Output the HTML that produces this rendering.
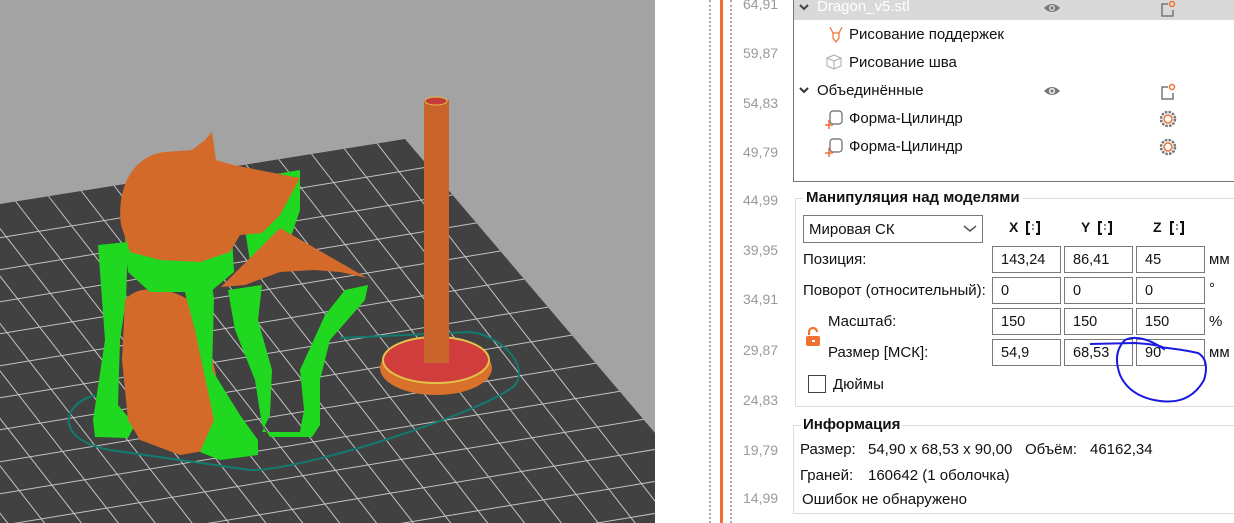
<!DOCTYPE html>
<html><head><meta charset="utf-8"><style>
*{margin:0;padding:0;box-sizing:border-box}
html,body{width:1234px;height:523px;overflow:hidden}
body{background:#fff;font-family:"Liberation Sans","DejaVu Sans",sans-serif;font-size:14px;color:#111;position:relative}
.a{position:absolute;white-space:nowrap}
.inp{position:absolute;border:1px solid #7a7a7a;height:27px;width:69px;padding:5px 0 0 8px;font-size:14.5px;background:#fff}
.rl{position:absolute;left:743px;color:#9a9a9a;font-size:14px}
</style></head><body>
<svg class="a" style="left:0;top:0" width="655" height="523" viewBox="0 0 655 523">
<defs><clipPath id="bed"><polygon points="0,204 405,139 655,433 655,523 0,523"/></clipPath></defs>
<rect width="655" height="523" fill="#a3a3a3"/>
<polygon points="0,204 405,139 655,433 655,523 0,523" fill="#414141"/>
<g clip-path="url(#bed)" stroke="#c4c4c4" stroke-width="1">
<path d="M-20,203 L600,1000 M13,198 L633,995 M46,193 L666,990 M79,188 L699,985 M112,183 L732,980 M145,178 L765,975 M178,172 L798,970 M211,167 L831,965 M244,162 L864,960 M277,157 L897,955 M310,152 L930,950 M343,147 L963,945 M376,142 L996,940 M-53,208 L567,1005 M-86,213 L534,1010 M-119,218 L501,1015 M-152,223 L468,1020 M-185,228 L435,1025 M-218,233 L402,1030 M-251,238 L369,1035 M-284,243 L336,1040 M-317,248 L303,1045 M-350,253 L270,1050 M-383,258 L237,1055 M-416,263 L204,1060"/>
<path d="M-50,246 L700,122 M-50,278 L700,154 M-50,310 L700,186 M-50,342 L700,218 M-50,374 L700,250 M-50,406 L700,282 M-50,438 L700,314 M-50,470 L700,346 M-50,502 L700,378 M-50,534 L700,410 M-50,566 L700,442 M-50,598 L700,474 M-50,630 L700,506 M-50,662 L700,538"/>
</g>
<path d="M95,395 C60,405 55,440 110,450 L250,470 C300,472 490,410 515,385 C530,365 500,335 470,332 L340,338" fill="none" stroke="#127a6e" stroke-width="2"/>
<ellipse cx="436" cy="368" rx="56" ry="27" fill="#d9702c"/>
<ellipse cx="436" cy="360" rx="53" ry="23" fill="#d13c3c" stroke="#e3c24a" stroke-width="2"/>
<rect x="424" y="100" width="25" height="263" fill="#c9652a"/>
<ellipse cx="436" cy="101" rx="11" ry="4" fill="#c53a3a" stroke="#e3c24a"/>
<path d="M98,245 L128,242 L126,300 L120,340 L118,405 L135,425 L128,438 L95,437 L93,420 L105,340 Z" fill="#1fd81f"/>
<path d="M125,300 C140,280 185,290 200,310 L215,370 L225,420 L210,450 L180,455 L140,440 L128,420 L122,360 Z" fill="#d46a2a"/>
<path d="M175,255 L208,252 L214,300 L212,370 L240,415 L258,440 L258,455 L220,460 L200,452 L214,420 L195,330 Z" fill="#1fd81f"/>
<path d="M228,290 L262,285 L258,320 L272,370 L270,415 L262,432 L300,432 L304,410 L300,370 L325,315 L345,290 L368,285 L365,300 L330,340 L320,380 L320,425 L312,437 L270,437 L262,425 L255,380 L235,330 Z" fill="#1fd81f"/>
<path d="M240,180 L300,170 L300,210 L290,240 L270,260 L250,262 L245,230 Z" fill="#1fd81f"/>
<path d="M125,238 L232,236 L234,272 L210,292 L150,292 L128,272 Z" fill="#1fd81f"/>
<path d="M121,225 C116,185 135,155 165,152 L192,150 L205,140 L212,132 L216,160 L233,165 L300,178 L280,215 L262,233 L240,235 L230,252 L200,262 L160,260 L130,252 Z" fill="#d46a2a"/>
<path d="M221,287 L280,228 L367,278 L340,272 L314,270 L280,272 L245,285 Z" fill="#d46a2a"/>
</svg>
<div class="a" style="left:655px;top:0;width:140px;height:523px;background:#fff"></div>
<div class="a" style="left:709px;top:0;width:1px;height:523px;border-left:2px dotted #aaa"></div>
<div class="a" style="left:730px;top:0;width:1px;height:523px;border-left:2px dotted #aaa"></div>
<div class="a" style="left:720px;top:0;width:3px;height:523px;background:#f07030"></div>
<div class="rl" style="top:-4px">64,91</div>
<div class="rl" style="top:45px">59,87</div>
<div class="rl" style="top:95px">54,83</div>
<div class="rl" style="top:144px">49,79</div>
<div class="rl" style="top:192px">44,99</div>
<div class="rl" style="top:242px">39,95</div>
<div class="rl" style="top:291px">34,91</div>
<div class="rl" style="top:342px">29,87</div>
<div class="rl" style="top:392px">24,83</div>
<div class="rl" style="top:442px">19,79</div>
<div class="rl" style="top:490px">14,99</div>

<div class="a" style="left:793px;top:0;width:441px;height:182px;border-left:1px solid #777;border-bottom:1px solid #777"></div>
<div class="a" style="left:794px;top:0;width:440px;height:20px;background:#d9d9d9"></div>
<svg class="a" style="left:798px;top:2px" width="12" height="10"><path d="M2,3 L6,7 L10,3" fill="none" stroke="#444" stroke-width="2"/></svg>
<div class="a" style="left:817px;top:-2px;color:#fff;font-size:15px">Dragon_v5.stl</div>
<svg class="a" style="left:1043px;top:1px" width="18" height="14"><path d="M1,7 Q9,-1 17,7 Q9,15 1,7Z" fill="#777"/><circle cx="9" cy="7" r="3" fill="#d9d9d9"/><circle cx="9" cy="7" r="1.6" fill="#777"/></svg>
<svg class="a" style="left:1159px;top:0" width="18" height="18"><path d="M9,4 H3 V16 H14 V10" fill="none" stroke="#777" stroke-width="1.5"/><circle cx="13" cy="4" r="2.5" fill="none" stroke="#f07030" stroke-width="1.5"/></svg>
<svg class="a" style="left:828px;top:26px" width="16" height="20"><path d="M2,1 L5,7 H11 L14,1 M5,7 V12 L8,16 L11,12 V7" fill="none" stroke="#f07030" stroke-width="1.2"/></svg>
<div class="a" style="left:849px;top:26px;font-size:15px">Рисование поддержек</div>
<svg class="a" style="left:825px;top:53px" width="18" height="18"><path d="M2,5 L9,2 L16,5 V13 L9,16 L2,13Z M2,5 L9,8 L16,5 M9,8 V16" fill="none" stroke="#aaa" stroke-width="1"/></svg>
<div class="a" style="left:849px;top:54px;font-size:15px">Рисование шва</div>
<svg class="a" style="left:798px;top:86px" width="12" height="10"><path d="M2,2 L6,6 L10,2" fill="none" stroke="#333" stroke-width="2"/></svg>
<div class="a" style="left:817px;top:82px;font-size:15px">Объединённые</div>
<svg class="a" style="left:1043px;top:84px" width="18" height="14"><path d="M1,7 Q9,-1 17,7 Q9,15 1,7Z" fill="#777"/><circle cx="9" cy="7" r="3" fill="#fff"/><circle cx="9" cy="7" r="1.6" fill="#777"/></svg>
<svg class="a" style="left:1159px;top:83px" width="18" height="18"><path d="M9,4 H3 V16 H14 V10" fill="none" stroke="#777" stroke-width="1.5"/><circle cx="13" cy="4" r="2.5" fill="none" stroke="#f07030" stroke-width="1.5"/></svg>
<svg class="a" style="left:824px;top:109px" width="22" height="22"><rect x="6" y="2" width="12" height="13" rx="3" fill="none" stroke="#666" stroke-width="1.2"/><path d="M5,11 V20 M1,16 H9" stroke="#f07030" stroke-width="1.5"/></svg>
<div class="a" style="left:849px;top:110px;font-size:15px">Форма-Цилиндр</div>
<svg class="a" style="left:1159px;top:110px" width="18" height="18"><circle cx="9" cy="9" r="7" fill="none" stroke="#777" stroke-width="2.5" stroke-dasharray="2.5 1.2"/><circle cx="9" cy="9" r="4" fill="none" stroke="#f07030" stroke-width="1.5"/></svg>
<svg class="a" style="left:824px;top:137px" width="22" height="22"><rect x="6" y="2" width="12" height="13" rx="3" fill="none" stroke="#666" stroke-width="1.2"/><path d="M5,11 V20 M1,16 H9" stroke="#f07030" stroke-width="1.5"/></svg>
<div class="a" style="left:849px;top:138px;font-size:15px">Форма-Цилиндр</div>
<svg class="a" style="left:1159px;top:138px" width="18" height="18"><circle cx="9" cy="9" r="7" fill="none" stroke="#777" stroke-width="2.5" stroke-dasharray="2.5 1.2"/><circle cx="9" cy="9" r="4" fill="none" stroke="#f07030" stroke-width="1.5"/></svg>

<div class="a" style="left:795px;top:198px;width:439px;height:209px;border:1px solid #dcdcdc;border-right:none"></div>
<div class="a" style="left:803px;top:189px;background:#fff;padding:0 3px;font-weight:bold;font-size:15px">Манипуляция над моделями</div>
<div class="a" style="left:803px;top:215px;width:180px;height:28px;border:1px solid #7a7a7a;padding:5px 0 0 5px;font-size:15px">Мировая СК</div>
<svg class="a" style="left:962px;top:224px" width="16" height="10"><path d="M2,2 L8,7 L14,2" fill="none" stroke="#555" stroke-width="1.5"/></svg>
<div class="a" style="left:1009px;top:219px;font-weight:bold;font-size:14px">X</div>
<div class="a" style="left:1081px;top:219px;font-weight:bold;font-size:14px">Y</div>
<div class="a" style="left:1153px;top:219px;font-weight:bold;font-size:14px">Z</div>
<svg class="a" style="left:1026px;top:221px" width="14" height="14"><path d="M4,1 H1 V13 H4 M10,1 H13 V13 H10" fill="none" stroke="#111" stroke-width="2.2"/><path d="M7,3 V11" stroke="#111" stroke-dasharray="2 2"/></svg>
<svg class="a" style="left:1098px;top:221px" width="14" height="14"><path d="M4,1 H1 V13 H4 M10,1 H13 V13 H10" fill="none" stroke="#111" stroke-width="2.2"/><path d="M7,3 V11" stroke="#111" stroke-dasharray="2 2"/></svg>
<svg class="a" style="left:1170px;top:221px" width="14" height="14"><path d="M4,1 H1 V13 H4 M10,1 H13 V13 H10" fill="none" stroke="#111" stroke-width="2.2"/><path d="M7,3 V11" stroke="#111" stroke-dasharray="2 2"/></svg>
<div class="a" style="left:803px;top:251px;font-size:15px">Позиция:</div>
<div class="a" style="left:803px;top:282px;font-size:15px">Поворот (относительный):</div>
<div class="a" style="left:828px;top:313px;font-size:15px">Масштаб:</div>
<div class="a" style="left:828px;top:344px;font-size:15px">Размер [МСК]:</div>
<svg class="a" style="left:805px;top:327px" width="16" height="20"><path d="M4,8 V5 A4,4 0 0 1 12,5" fill="none" stroke="#f07030" stroke-width="2.2"/><rect x="1" y="9" width="14" height="10" rx="2" fill="#f07030"/><rect x="7" y="13" width="3" height="2" fill="#fff"/></svg>
<div class="inp" style="left:992px;top:246px">143,24</div>
<div class="inp" style="left:1064px;top:246px">86,41</div>
<div class="inp" style="left:1136px;top:246px">45</div>
<div class="inp" style="left:992px;top:277px">0</div>
<div class="inp" style="left:1064px;top:277px">0</div>
<div class="inp" style="left:1136px;top:277px">0</div>
<div class="inp" style="left:992px;top:308px">150</div>
<div class="inp" style="left:1064px;top:308px">150</div>
<div class="inp" style="left:1136px;top:308px">150</div>
<div class="inp" style="left:992px;top:339px">54,9</div>
<div class="inp" style="left:1064px;top:339px">68,53</div>
<div class="inp" style="left:1136px;top:339px">90</div>
<div class="a" style="left:1209px;top:251px;font-size:15px">мм</div>
<div class="a" style="left:1209px;top:280px;font-size:15px">°</div>
<div class="a" style="left:1209px;top:313px;font-size:15px">%</div>
<div class="a" style="left:1209px;top:344px;font-size:15px">мм</div>
<div class="a" style="left:808px;top:375px;width:18px;height:18px;border:1px solid #444;background:#fff"></div>
<div class="a" style="left:833px;top:376px;font-size:15px">Дюймы</div>
<svg class="a" style="left:1080px;top:325px" width="154" height="85"><path d="M10,19 L55,18 Q85,20 84,24 Q60,8 45,15 Q32,28 40,50 Q50,72 80,76 Q110,80 124,55 Q130,35 118,28 Q100,24 78,22" fill="none" stroke="#1a1ae0" stroke-width="2"/></svg>

<div class="a" style="left:793px;top:425px;width:441px;height:89px;border:1px solid #dcdcdc;border-right:none"></div>
<div class="a" style="left:801px;top:416px;background:#fff;padding:0 2px;font-weight:bold;font-size:15px">Информация</div>
<div class="a" style="left:800px;top:441px;font-size:15px">Размер:</div>
<div class="a" style="left:868px;top:441px;font-size:15px">54,90 x 68,53 x 90,00</div>
<div class="a" style="left:1025px;top:441px;font-size:15px">Объём:</div>
<div class="a" style="left:1090px;top:441px;font-size:15px">46162,34</div>
<div class="a" style="left:800px;top:467px;font-size:15px">Граней:</div>
<div class="a" style="left:868px;top:467px;font-size:15px">160642 (1 оболочка)</div>
<div class="a" style="left:802px;top:491px;font-size:15px">Ошибок не обнаружено</div>
</body></html>
